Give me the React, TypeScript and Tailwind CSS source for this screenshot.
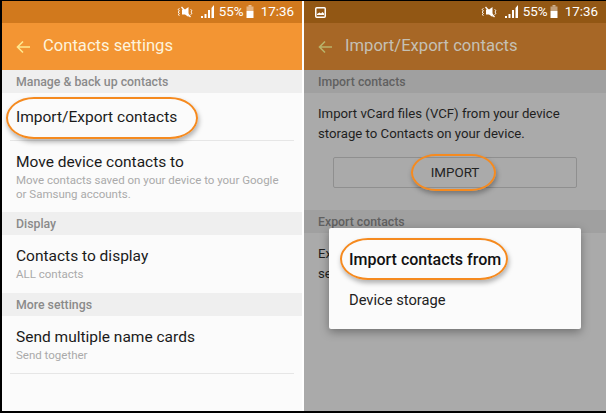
const roboto = "font-['Roboto',sans-serif]";

function SoundOff() {
  return (
    <svg width="16" height="12" viewBox="0 0 16 12" className="mr-[8px]">
      <path d="M5 3.5h3L11.5 1v10L8 8.5H5z" fill="#fff" />
      <path d="M4.5 1l9 10" stroke="#fff" strokeWidth="1.3" />
      <path d="M2.5 2.5L1 3.5 2.5 5 1 6l1.5 1.5L1 8.5 2.5 9.5M13.5 3.5l1.5 1-1 1.5 1 1.5-1.5 1" stroke="#fff" strokeWidth="0.9" fill="none" />
    </svg>
  );
}

function Signal() {
  return (
    <svg width="14" height="14" viewBox="0 0 14 14" className="mr-[4px]">
      <path d="M0 13h2v-2H0zM3.5 13h2V9h-2zM7 13h2V5H7z" fill="#fff" />
      <path d="M10.5 13h2.5V0l-2.5 3z" fill="#fff" />
    </svg>
  );
}

function Battery() {
  return (
    <svg width="8" height="13" viewBox="0 0 8 13" className="ml-[2px]">
      <path d="M2.5 0h3v1.5h-3z" fill="#ffffff" fillOpacity="0.55" />
      <path d="M0.5 1.5h7V6h-7z" fill="#ffffff" fillOpacity="0.45" />
      <path d="M0.5 6h7v7h-7z" fill="#fff" />
    </svg>
  );
}

function StatusBar({ dark }: { dark?: boolean }) {
  return (
    <div className={`h-[22px] flex items-center px-[8px] text-white text-[13.4px] ${dark ? "bg-[#925714]" : "bg-[#d1791d]"}`}>
      {dark && (
        <svg width="11" height="11" viewBox="0 0 11 11" className="ml-[3px]">
          <rect x="0.75" y="0.75" width="9.5" height="9.5" rx="1" fill="none" stroke="#fff" strokeWidth="1.5" />
          <path d="M2 8h7V6.5L7.5 5 6 6.5 4.5 5.5 2 7z" fill="#fff" />
        </svg>
      )}
      <div className="ml-auto flex items-center">
        <SoundOff />
        <Signal />
        <span>55%</span>
        <Battery />
        <span className="ml-[7px]">17:36</span>
      </div>
    </div>
  );
}

function Toolbar({ title, dark }: { title: string; dark?: boolean }) {
  const stroke = dark ? "#b9b36a" : "#ffe98f";
  return (
    <div className={`h-[47px] flex items-center pl-[14px] text-[16.6px] ${dark ? "bg-[#a76726] text-[#c5c0b4]" : "bg-[#f39533] text-[#fdf3dc]"}`}>
      <svg width="15" height="14" viewBox="0 0 15 14" fill="none" stroke={stroke} strokeWidth="1.6">
        <path d="M14 7H1.5M7 1.5L1.5 7 7 12.5" />
      </svg>
      <span className="ml-[12px]">{title}</span>
    </div>
  );
}

function SectionHeader({ label, dark }: { label: string; dark?: boolean }) {
  return (
    <div className={`h-[23px] flex items-center pl-[14px] pt-[2px] text-[12.3px] font-medium ${dark ? "bg-[#a0a0a0] text-[#606060]" : "bg-[#efefef] text-[#8a8a8a]"}`}>
      {label}
    </div>
  );
}

function Item({ title, sub, h }: { title: string; sub?: React.ReactNode; h: string }) {
  return (
    <div className={`${h} flex flex-col justify-center pl-[14px] ${sub ? "pb-[2px]" : ""}`}>
      <div className="text-[15.5px] leading-[22px] text-[#1a1a1a]">{title}</div>
      {sub && <div className="text-[11.5px] leading-[14px] text-[#aaaaaa]">{sub}</div>}
    </div>
  );
}

function Circle({ className }: { className: string }) {
  return (
    <div className={`absolute rounded-[28px/21px] border-2 border-[#f58a1f] shadow-[1px_3px_5px_rgba(0,0,0,0.3)] ${className}`} />
  );
}

export default function App() {
  return (
    <div className={`w-[606px] h-[413px] bg-black pt-[1px] pb-[2px] pl-[2px] flex overflow-hidden ${roboto}`}>
      <div className="relative w-[300px] h-full bg-[#fbfbfb] flex flex-col">
        <StatusBar />
        <Toolbar title="Contacts settings" />
        <SectionHeader label="Manage & back up contacts" />
        <Item title="Import/Export contacts" h="h-[47px]" />
        <div className="mx-[8px] h-[1px] bg-[#e6e6e6]" />
        <Item
          title="Move device contacts to"
          h="h-[71px]"
          sub={<>Move contacts saved on your device to your Google<br />or Samsung accounts.</>}
        />
        <SectionHeader label="Display" />
        <Item title="Contacts to display" sub="ALL contacts" h="h-[58px]" />
        <SectionHeader label="More settings" />
        <Item title="Send multiple name cards" sub="Send together" h="h-[57px]" />
        <div className="mx-[8px] h-[1px] bg-[#e6e6e6]" />
        <Circle className="left-[4px] top-[96px] w-[192px] h-[42px]" />
      </div>
      <div className="w-[2px] bg-white" />
      <div className="relative flex-1 h-full bg-[#aaaaaa] flex flex-col">
        <StatusBar dark />
        <Toolbar title="Import/Export contacts" dark />
        <SectionHeader label="Import contacts" dark />
        <div className="px-[14px] pt-[11px] text-[13.2px] leading-[20px] text-[#1f1f1f] h-[64px]">
          Import vCard files (VCF) from your device<br />storage to Contacts on your device.
        </div>
        <button className="mx-[29px] h-[31px] shrink-0 pt-[2px] rounded-[2px] border border-[#8f8f8f] text-[13.4px] text-[#222222]">
          IMPORT
        </button>
        <div className="h-[22px] shrink-0" />
        <SectionHeader label="Export contacts" dark />
        <div className="px-[14px] pt-[11px] text-[13.2px] leading-[20px] text-[#1f1f1f]">
          Ex<br />se
        </div>
        <div className="absolute left-[25px] top-[227px] w-[252px] h-[101px] bg-[#fbfbfb] rounded-[2px] shadow-[0_3px_10px_rgba(0,0,0,0.35)] pl-[20px] pt-[21px]">
          <div className="text-[16px] leading-[22px] font-medium text-[#111111]">Import contacts from</div>
          <div className="text-[14.7px] leading-[22px] text-[#222222] mt-[18px]">Device storage</div>
        </div>
        <Circle className="left-[36px] top-[237px] w-[168px] h-[42px]" />
        <Circle className="left-[107px] top-[153px] w-[85px] h-[37px]" />
      </div>
    </div>
  );
}
